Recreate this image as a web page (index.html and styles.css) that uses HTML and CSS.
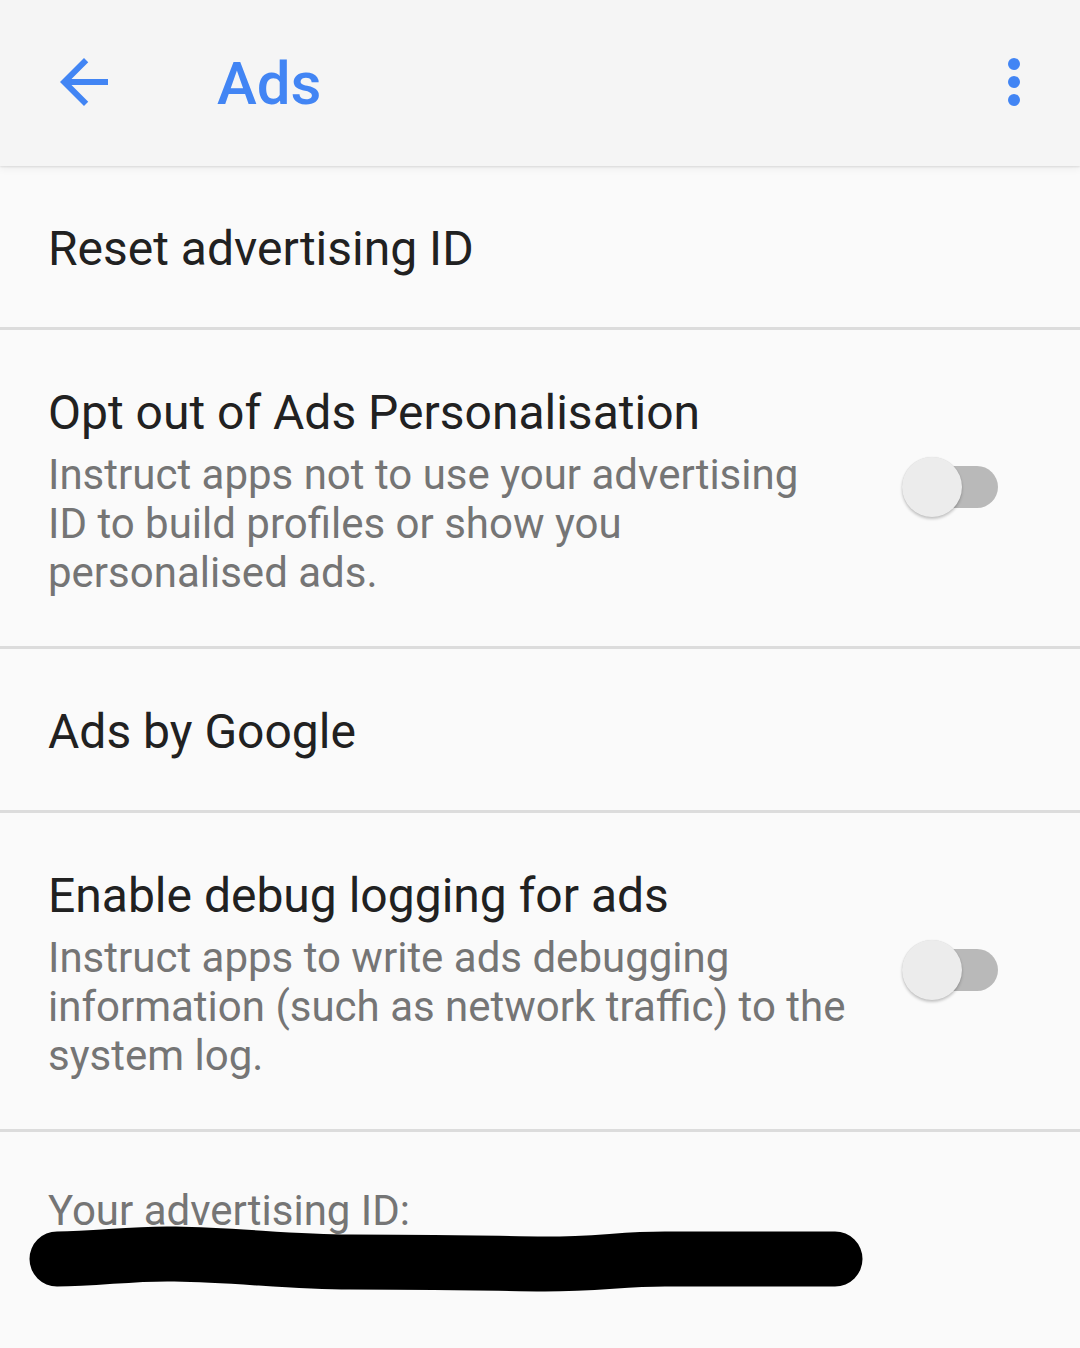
FILE: index.html
```html
<!DOCTYPE html>
<html lang="en">
<head>
<meta charset="utf-8">
<title>Ads</title>
<link rel="stylesheet" href="styles.css">
</head>
<body>
<div class="screen">
  <header class="appbar">
    <button class="icon-btn back" aria-label="Navigate up">
      <svg viewBox="0 0 24 24" width="72" height="72"><path fill="#4285f4" d="M20 11H7.83l5.59-5.59L12 4l-8 8 8 8 1.41-1.41L7.83 13H20v-2z"/></svg>
    </button>
    <h1 class="title">Ads</h1>
    <button class="icon-btn more" aria-label="More options">
      <svg viewBox="0 0 24 24" width="72" height="72"><circle cx="12" cy="6" r="2" fill="#4285f4"/><circle cx="12" cy="12" r="2" fill="#4285f4"/><circle cx="12" cy="18" r="2" fill="#4285f4"/></svg>
    </button>
  </header>

  <main class="list">
    <div class="pref pref-single">
      <div class="pref-text">
        <div class="pref-title">Reset advertising ID</div>
      </div>
    </div>

    <div class="pref pref-double">
      <div class="pref-text">
        <div class="pref-title">Opt out of Ads Personalisation</div>
        <div class="pref-summary">Instruct apps not to use your advertising<br>ID to build profiles or show you<br>personalised ads.</div>
      </div>
      <div class="switch" role="switch" aria-checked="false">
        <span class="switch-track"></span>
        <span class="switch-thumb"></span>
      </div>
    </div>

    <div class="pref pref-single">
      <div class="pref-text">
        <div class="pref-title">Ads by Google</div>
      </div>
    </div>

    <div class="pref pref-double">
      <div class="pref-text">
        <div class="pref-title">Enable debug logging for ads</div>
        <div class="pref-summary">Instruct apps to write ads debugging<br>information (such as network traffic) to the<br>system log.</div>
      </div>
      <div class="switch" role="switch" aria-checked="false">
        <span class="switch-track"></span>
        <span class="switch-thumb"></span>
      </div>
    </div>

    <div class="pref-footer">
      <div class="pref-summary">Your advertising ID:</div>
      <svg class="redaction" width="880" height="72" viewBox="0 0 880 72" aria-hidden="true">
        <path d="M57 34 C 100 34, 130 28, 175 29 C 240 30, 290 37, 350 37 C 420 37, 470 38, 545 39 C 600 39, 620 34, 665 34 C 720 34, 780 34, 835 34" fill="none" stroke="#000" stroke-width="55" stroke-linecap="round" stroke-linejoin="round"/>
      </svg>
    </div>
  </main>
</div>
</body>
</html>
```

FILE: styles.css
```css
* {
  box-sizing: border-box;
}

html, body {
  margin: 0;
  padding: 0;
  background: #fafafa;
}

body {
  font-family: Roboto, "Noto Sans", "Liberation Sans", sans-serif;
  color: #212121;
}

.screen {
  width: 1080px;
  min-height: 1348px;
  background: #fafafa;
}

.appbar {
  position: relative;
  z-index: 1;
  height: 166px;
  background: #f5f5f5;
  display: flex;
  align-items: flex-start;
  padding: 46px 30px 0 48px;
  box-shadow: 0 1px 2px rgba(0, 0, 0, 0.10), 0 3px 8px rgba(0, 0, 0, 0.05);
}

.icon-btn {
  width: 72px;
  height: 72px;
  padding: 0;
  margin: 0;
  border: 0;
  background: none;
  display: block;
}

.icon-btn svg {
  display: block;
}

.title {
  margin: 0 0 0 97px;
  flex: 1;
  font-size: 60px;
  font-weight: 500;
  line-height: 70px;
  color: #4285f4;
  padding-top: 3px;
  letter-spacing: 0;
}

.list {
  display: flex;
  flex-direction: column;
}

.pref {
  display: flex;
  align-items: center;
  border-bottom: 3px solid #dcdcdc;
  padding-left: 48px;
  padding-right: 82px;
}

.pref-single {
  height: 164px;
  padding-top: 55px;
  padding-bottom: 50px;
  align-items: flex-start;
}

.pref-double {
  height: 319px;
  padding-top: 55px;
  padding-bottom: 57px;
}

.pref-text {
  flex: 0 0 805px;
  align-self: flex-start;
}

.pref-title {
  font-size: 48px;
  line-height: 56px;
  color: #212121;
}

.pref-summary {
  margin-top: 9px;
  font-size: 42px;
  line-height: 49px;
  color: #757575;
}

.switch {
  position: relative;
  margin-left: 49px;
  width: 96px;
  height: 60px;
  flex: 0 0 96px;
}

.switch-track {
  position: absolute;
  left: 6px;
  right: 0;
  top: 9px;
  height: 42px;
  border-radius: 21px;
  background: #b9b9b9;
}

.switch-thumb {
  position: absolute;
  left: 0;
  top: 0;
  width: 60px;
  height: 60px;
  border-radius: 50%;
  background: #ececec;
  box-shadow: 0 2px 3px rgba(0, 0, 0, 0.22), 0 0 1px rgba(0, 0, 0, 0.12);
}

.pref-footer {
  padding: 54px 0 0 48px;
}

.pref-footer .pref-summary {
  margin-top: 0;
}

.redaction {
  display: block;
  margin: -10px 0 0 -48px;
}
```
